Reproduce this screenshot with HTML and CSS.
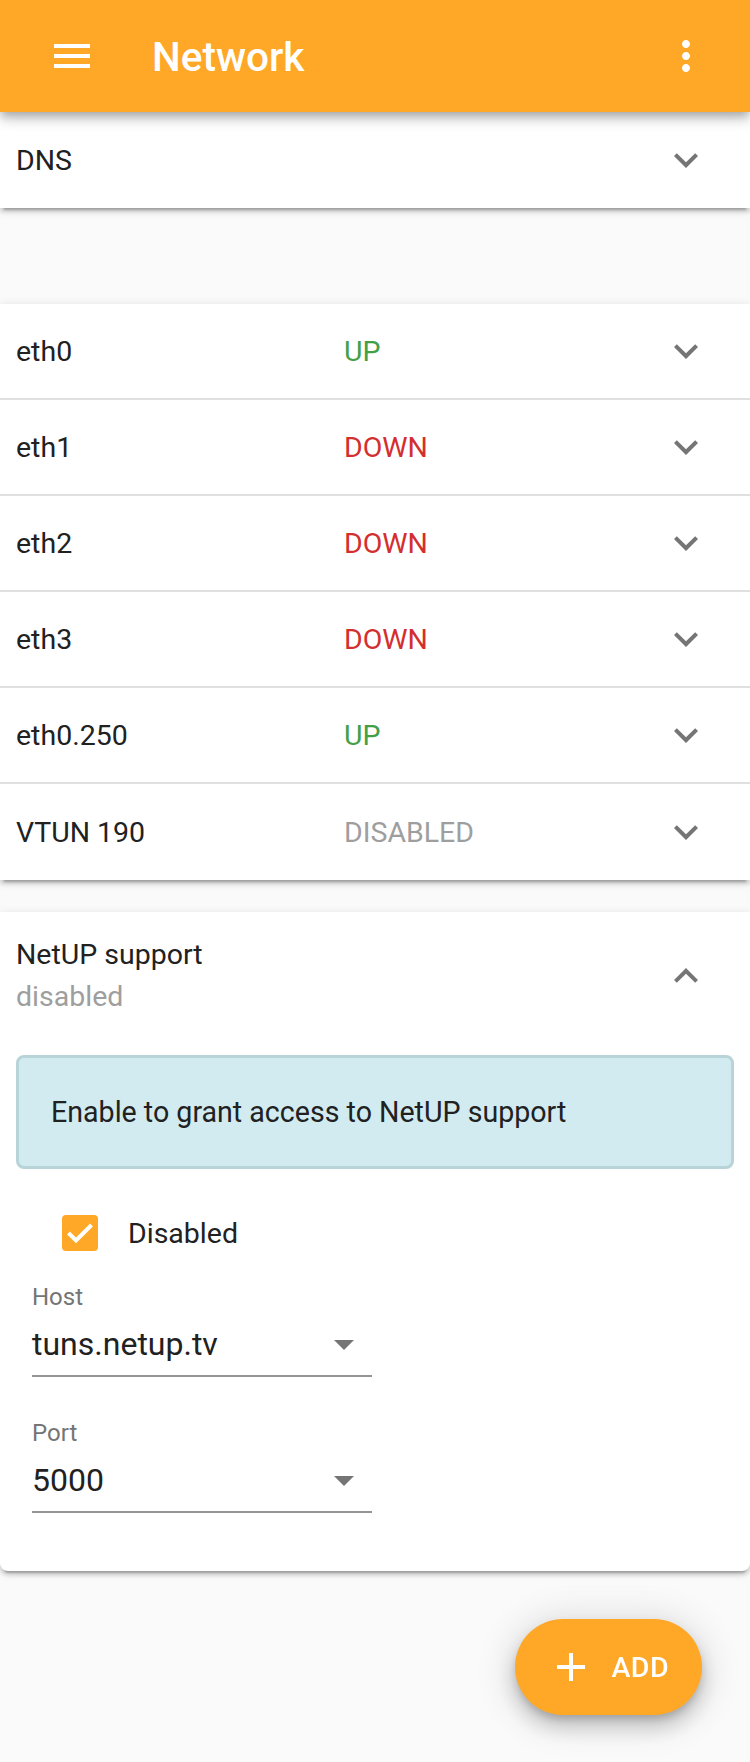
FILE: index.html
```html
<!DOCTYPE html>
<html lang="en">
<head>
<meta charset="utf-8">
<title>Network</title>
<link rel="stylesheet" href="styles.css">
</head>
<body>
<header class="appbar">
  <svg class="appbar-icon" viewBox="0 0 24 24"><path d="M3 18h18v-2H3v2zm0-5h18v-2H3v2zm0-7v2h18V6H3z"/></svg>
  <h1 class="appbar-title">Network</h1>
  <svg class="appbar-icon appbar-more" viewBox="0 0 24 24"><path d="M12 8c1.1 0 2-.9 2-2s-.9-2-2-2-2 .9-2 2 .9 2 2 2zm0 2c-1.1 0-2 .9-2 2s.9 2 2 2 2-.9 2-2-.9-2-2-2zm0 6c-1.1 0-2 .9-2 2s.9 2 2 2 2-.9 2-2-.9-2-2-2z"/></svg>
</header>

<main class="content">
  <section class="card card-dns">
    <div class="row">
      <span class="row-name">DNS</span>
      <span class="row-status"></span>
      <svg class="chevron" viewBox="0 0 24 24"><path d="M16.59 8.59L12 13.17 7.41 8.59 6 10l6 6 6-6z"/></svg>
    </div>
  </section>

  <section class="card card-ifaces">
    <div class="row divided">
      <span class="row-name">eth0</span>
      <span class="row-status up">UP</span>
      <svg class="chevron" viewBox="0 0 24 24"><path d="M16.59 8.59L12 13.17 7.41 8.59 6 10l6 6 6-6z"/></svg>
    </div>
    <div class="row divided">
      <span class="row-name">eth1</span>
      <span class="row-status down">DOWN</span>
      <svg class="chevron" viewBox="0 0 24 24"><path d="M16.59 8.59L12 13.17 7.41 8.59 6 10l6 6 6-6z"/></svg>
    </div>
    <div class="row divided">
      <span class="row-name">eth2</span>
      <span class="row-status down">DOWN</span>
      <svg class="chevron" viewBox="0 0 24 24"><path d="M16.59 8.59L12 13.17 7.41 8.59 6 10l6 6 6-6z"/></svg>
    </div>
    <div class="row divided">
      <span class="row-name">eth3</span>
      <span class="row-status down">DOWN</span>
      <svg class="chevron" viewBox="0 0 24 24"><path d="M16.59 8.59L12 13.17 7.41 8.59 6 10l6 6 6-6z"/></svg>
    </div>
    <div class="row divided">
      <span class="row-name">eth0.250</span>
      <span class="row-status up">UP</span>
      <svg class="chevron" viewBox="0 0 24 24"><path d="M16.59 8.59L12 13.17 7.41 8.59 6 10l6 6 6-6z"/></svg>
    </div>
    <div class="row">
      <span class="row-name">VTUN 190</span>
      <span class="row-status off">DISABLED</span>
      <svg class="chevron" viewBox="0 0 24 24"><path d="M16.59 8.59L12 13.17 7.41 8.59 6 10l6 6 6-6z"/></svg>
    </div>
  </section>

  <section class="card card-support">
    <div class="support-head">
      <div class="support-titles">
        <div class="support-title">NetUP support</div>
        <div class="support-sub">disabled</div>
      </div>
      <svg class="chevron" viewBox="0 0 24 24"><path d="M12 8l-6 6 1.41 1.41L12 10.83l4.59 4.58L18 14z"/></svg>
    </div>
    <div class="support-body">
      <div class="info-box">Enable to grant access to NetUP support</div>
      <label class="check-row">
        <span class="checkbox">
          <svg viewBox="0 0 36 36"><polyline points="6.5,18 14,25.5 29.5,10" fill="none" stroke="#fff" stroke-width="4"/></svg>
        </span>
        <span class="check-label">Disabled</span>
      </label>
      <div class="field">
        <div class="field-label">Host</div>
        <div class="field-input">
          <span class="field-value">tuns.netup.tv</span>
          <svg class="drop" viewBox="0 0 24 24"><path d="M7 10l5 5 5-5z"/></svg>
        </div>
      </div>
      <div class="field field-port">
        <div class="field-label">Port</div>
        <div class="field-input">
          <span class="field-value">5000</span>
          <svg class="drop" viewBox="0 0 24 24"><path d="M7 10l5 5 5-5z"/></svg>
        </div>
      </div>
    </div>
  </section>
</main>

<button class="fab">
  <svg class="fab-icon" viewBox="0 0 24 24"><path d="M19 13h-6v6h-2v-6H5v-2h6V5h2v6h6v2z"/></svg>
  <span class="fab-text">ADD</span>
</button>
</body>
</html>
```
FILE: styles.css
```css
* { box-sizing: border-box; }

html, body {
  margin: 0;
  padding: 0;
}

body {
  background: #fafafa;
  font-family: Roboto, "Noto Sans", Arial, sans-serif;
  color: #212121;
  min-height: 1762px;
}

.appbar {
  position: relative;
  z-index: 2;
  height: 112px;
  background: #ffa726;
  display: flex;
  align-items: center;
  padding: 0 40px 0 48px;
  box-shadow: 0 4px 8px -2px rgba(0,0,0,.2), 0 8px 10px 0 rgba(0,0,0,.14), 0 2px 20px 0 rgba(0,0,0,.12);
}

.appbar-icon {
  width: 48px;
  height: 48px;
  fill: #fff;
  flex: 0 0 48px;
}

.appbar-title {
  margin: 2px 0 0 56px;
  flex: 1;
  font-size: 40.5px;
  font-weight: 500;
  color: #fff;
  letter-spacing: 0;
}

.content {
  display: flex;
  flex-direction: column;
}

.card {
  background: #fff;
  box-shadow: 0 4px 4px 0 rgba(0,0,0,.14), 0 6px 2px -4px rgba(0,0,0,.2), 0 2px 10px 0 rgba(0,0,0,.12);
}

.card-dns { position: relative; z-index: 1; }
.card-ifaces { margin-top: 96px; }
.card-support {
  margin-top: 32px;
  border-radius: 0 0 8px 8px;
}

.row {
  display: flex;
  align-items: center;
  height: 96px;
  padding: 0 40px 0 16px;
  font-size: 28.5px;
}

.row.divided {
  height: 96px;
  border-bottom: 2px solid #e0e0e0;
}

.row-name {
  flex: 0 0 328px;
}

.row-status {
  flex: 1;
}

.up { color: #43a047; }
.down { color: #d32f2f; }
.off { color: #9e9e9e; }

.chevron {
  width: 48px;
  height: 48px;
  fill: #757575;
  flex: 0 0 48px;
}

.support-head {
  display: flex;
  align-items: center;
  height: 128px;
  padding: 0 40px 0 16px;
}

.support-titles {
  flex: 1;
  font-size: 28.5px;
  line-height: 42px;
}

.support-sub {
  color: #9e9e9e;
}

.support-body {
  padding: 15px 16px 58px 16px;
}

.info-box {
  height: 114px;
  display: flex;
  align-items: center;
  padding: 0 32px;
  background: #d1ebf0;
  border: 3px solid #b9d4d9;
  border-radius: 8px;
  font-size: 28.6px;
  color: #212121;
}

.check-row {
  display: flex;
  align-items: center;
  height: 72px;
  margin-top: 28px;
  padding-left: 46px;
}

.checkbox {
  width: 36px;
  height: 36px;
  border-radius: 4px;
  background: #ffa726;
  display: flex;
  flex: 0 0 36px;
}

.checkbox svg {
  width: 36px;
  height: 36px;
}

.check-label {
  margin-left: 30px;
  font-size: 28.5px;
}

.field {
  width: 340px;
  margin: 12px 0 0 16px;
}

.field-port {
  margin-top: 40px;
}

.field-label {
  font-size: 24px;
  line-height: 32px;
  color: #757575;
}

.field-input {
  height: 64px;
  display: flex;
  align-items: center;
  border-bottom: 2px solid #949494;
  padding-right: 4px;
}

.field-value {
  flex: 1;
  font-size: 32px;
  color: #212121;
}

.drop {
  width: 48px;
  height: 48px;
  fill: #757575;
  flex: 0 0 48px;
  margin-right: -12px;
  position: relative;
  right: 12px;
}

.fab {
  position: fixed;
  right: 48px;
  bottom: 47px;
  height: 96px;
  display: flex;
  align-items: center;
  padding: 0 33px 0 32px;
  border: none;
  border-radius: 48px;
  background: #ffa726;
  color: #fff;
  font-family: Roboto, "Noto Sans", Arial, sans-serif;
  box-shadow: 0 6px 10px -2px rgba(0,0,0,.2), 0 12px 20px 2px rgba(0,0,0,.14), 0 4px 36px 6px rgba(0,0,0,.12);
}

.fab-icon {
  width: 48px;
  height: 48px;
  fill: #fff;
}

.fab-text {
  margin-left: 16px;
  font-size: 28.5px;
  font-weight: 500;
  letter-spacing: .5px;
}
```
